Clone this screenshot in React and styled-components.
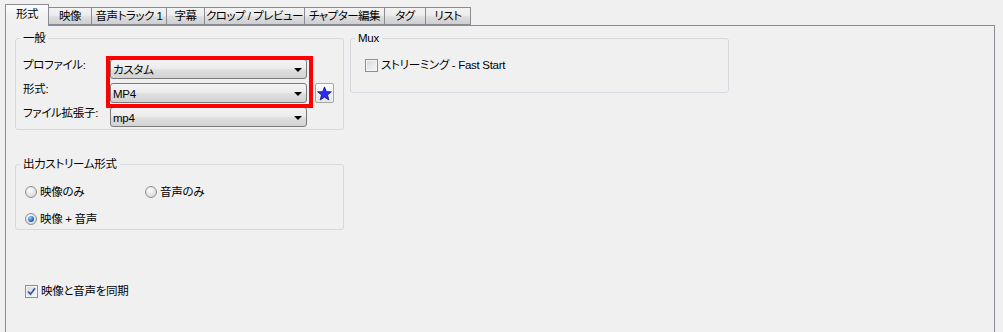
import React from 'react';
import styled, { createGlobalStyle } from 'styled-components';

const GlobalStyle = createGlobalStyle`
  html, body {
    margin: 0;
    background: #f0f0f0;
  }
  body {
    font-family: "Liberation Sans", "Noto Sans CJK JP", sans-serif;
    font-size: 11.5px;
    letter-spacing: -0.3px;
    line-height: 14px;
    color: #000;
    font-feature-settings: "palt";
  }
`;

const Window = styled.div`
  box-sizing: border-box;
  height: 332px;
  padding: 4px 8px 0 5px;
  display: flex;
  flex-direction: column;
  overflow: hidden;
`;

const TabBar = styled.div`
  display: flex;
  align-items: flex-end;
  height: 21px;
  flex: none;
  position: relative;
  z-index: 1;
`;

const Tab = styled.div`
  box-sizing: border-box;
  width: ${({ $w }) => $w}px;
  height: ${({ $active }) => ($active ? 22 : 18)}px;
  margin-bottom: ${({ $active }) => ($active ? -1 : 0)}px;
  margin-left: ${({ $first }) => ($first ? 0 : -1)}px;
  border: 1px solid #898c95;
  border-bottom: ${({ $active }) => ($active ? 'none' : '1px solid #898c95')};
  background: ${({ $active }) =>
    $active
      ? 'linear-gradient(#fbfbfb, #f0f0f0 60%)'
      : 'linear-gradient(#f3f3f3, #ececec 45%, #dedede 55%, #cfcfcf)'};
  position: relative;
  z-index: ${({ $active }) => ($active ? 2 : 1)};
  display: flex;
  align-items: center;
  justify-content: center;
  padding-bottom: ${({ $active }) => ($active ? 4 : 1)}px;
  letter-spacing: -0.5px;
  white-space: nowrap;
`;

const Panel = styled.div`
  flex: none;
  height: 330px;
  border: 1px solid #898c95;
  background: #f0f0f0;
  display: flex;
  align-items: flex-start;
  padding: 5px 0 0 9px;
`;

const Column = styled.div`
  width: 329px;
  display: flex;
  flex-direction: column;
`;

const Group = styled.fieldset`
  box-sizing: border-box;
  width: ${({ $w }) => $w}px;
  margin: ${({ $mt }) => $mt || 0}px 0 0 ${({ $ml }) => $ml || 0}px;
  padding: 0;
  min-width: 0;
  border: 1px solid #d5d9dd;
  border-radius: 3px;
`;

const Legend = styled.legend`
  margin-left: 4px;
  padding: 0 3px;
  line-height: 14px;
`;

const FormGrid = styled.div`
  display: grid;
  grid-template-columns: 87px 197px 27px;
  grid-template-rows: repeat(3, 20px);
  row-gap: 4px;
  padding: 14px 0 2px 7px;
`;

const Label = styled.div`
  grid-column: 1;
  grid-row: ${({ $row }) => $row};
  line-height: 14px;
  margin-top: -1px;
  white-space: nowrap;
`;

const Combo = styled.div`
  grid-column: 2;
  grid-row: ${({ $row }) => $row};
  box-sizing: border-box;
  border: 1px solid #7a7a7a;
  border-radius: 3px;
  background: linear-gradient(#f4f4f4, #ececec 45%, #dfdfdf 55%, #d2d2d2);
  display: flex;
  align-items: center;
  padding: 0 4px 0 2px;
`;

const ComboText = styled.span`
  flex: 1;
  padding-top: 2px;
`;

const Arrow = styled.span`
  width: 0;
  height: 0;
  border-left: 4px solid transparent;
  border-right: 4px solid transparent;
  border-top: 4px solid #000;
  margin-top: 1px;
`;

const Highlight = styled.div`
  grid-column: 2;
  grid-row: 1 / span 2;
  margin: -3px -6px -5px -4px;
  border: 4px solid #f00;
  pointer-events: none;
  z-index: 1;
`;

const StarButton = styled.div`
  grid-column: 3;
  grid-row: 2;
  justify-self: end;
  box-sizing: border-box;
  width: 19px;
  height: 20px;
  border: 1px solid #a7a7a7;
  border-radius: 2px;
  background: linear-gradient(#fdfdfd, #e6e6e6);
  display: flex;
  align-items: center;
  justify-content: center;
`;

const OptionGrid = styled.div`
  display: grid;
  grid-template-columns: 120px 1fr;
  grid-auto-rows: 16px;
  row-gap: 11px;
  padding: 13px 0 2px 9px;
`;

const Option = styled.label`
  display: flex;
  align-items: center;
  gap: 3px;
  white-space: nowrap;
`;

const Radio = styled.span`
  box-sizing: border-box;
  width: 12px;
  height: 12px;
  border-radius: 50%;
  border: 1px solid #8f8f8f;
  background: radial-gradient(circle at 40% 35%, #fdfdfd, #dcdcdc 70%, #cfcfcf);
  display: flex;
  align-items: center;
  justify-content: center;

  &::after {
    content: '';
    display: ${({ $checked }) => ($checked ? 'block' : 'none')};
    width: 6px;
    height: 6px;
    border-radius: 50%;
    background: radial-gradient(circle at 35% 30%, #9fd6ff, #1f73c4 55%, #0b3a78);
  }
`;

const Check = styled.span`
  box-sizing: border-box;
  width: 13px;
  height: 13px;
  border: 1px solid #8f8f8f;
  background: linear-gradient(135deg, #d6d9dd, #f7f7f7);
  box-shadow: inset 0 0 0 1px #f4f4f4;
  display: flex;
  align-items: center;
  justify-content: center;
`;

const MuxBody = styled.div`
  padding: 13px 0 20px 14px;
`;

const SyncRow = styled.div`
  margin-top: 54px;
  padding-left: 10px;
`;

const CheckMark = () => (
  <svg width="9" height="9" viewBox="0 0 9 9">
    <path d="M1 4.5 L3.5 7.2 L8 1.2" fill="none" stroke="#3c5a9a" strokeWidth="1.8" />
  </svg>
);

const Star = () => (
  <svg width="15" height="15" viewBox="0 0 24 24">
    <polygon
      points="12,1.5 15,9 23,9.3 16.8,14.3 19,22.3 12,17.8 5,22.3 7.2,14.3 1,9.3 9,9"
      fill="#2b2bf2"
      stroke="#16168c"
      strokeWidth="1.3"
      strokeLinejoin="round"
    />
  </svg>
);

const tabs = [
  { label: '形式', w: 44, active: true },
  { label: '映像', w: 44 },
  { label: '音声トラック 1', w: 76 },
  { label: '字幕', w: 39 },
  { label: 'クロップ / プレビュー', w: 101 },
  { label: 'チャプター編集', w: 81 },
  { label: 'タグ', w: 42 },
  { label: 'リスト', w: 46 },
];

const App = () => (
  <>
    <GlobalStyle />
    <Window>
      <TabBar>
        {tabs.map((t, i) => (
          <Tab key={t.label} $w={t.w} $active={t.active} $first={i === 0}>
            {t.label}
          </Tab>
        ))}
      </TabBar>
      <Panel>
        <Column>
          <Group $w={329}>
            <Legend>一般</Legend>
            <FormGrid>
              <Label $row={1}>プロファイル:</Label>
              <Combo $row={1}><ComboText>カスタム</ComboText><Arrow /></Combo>
              <Label $row={2}>形式:</Label>
              <Combo $row={2}><ComboText>MP4</ComboText><Arrow /></Combo>
              <StarButton><Star /></StarButton>
              <Label $row={3}>ファイル拡張子:</Label>
              <Combo $row={3}><ComboText>mp4</ComboText><Arrow /></Combo>
              <Highlight />
            </FormGrid>
          </Group>
          <Group $w={329} $mt={27}>
            <Legend>出力ストリーム形式</Legend>
            <OptionGrid>
              <Option><Radio />映像のみ</Option>
              <Option><Radio />音声のみ</Option>
              <Option><Radio $checked />映像 + 音声</Option>
            </OptionGrid>
          </Group>
          <SyncRow>
            <Option><Check><CheckMark /></Check>映像と音声を同期</Option>
          </SyncRow>
        </Column>
        <Group $w={379} $ml={6}>
          <Legend>Mux</Legend>
          <MuxBody>
            <Option><Check />ストリーミング - Fast Start</Option>
          </MuxBody>
        </Group>
      </Panel>
    </Window>
  </>
);

export default App;
